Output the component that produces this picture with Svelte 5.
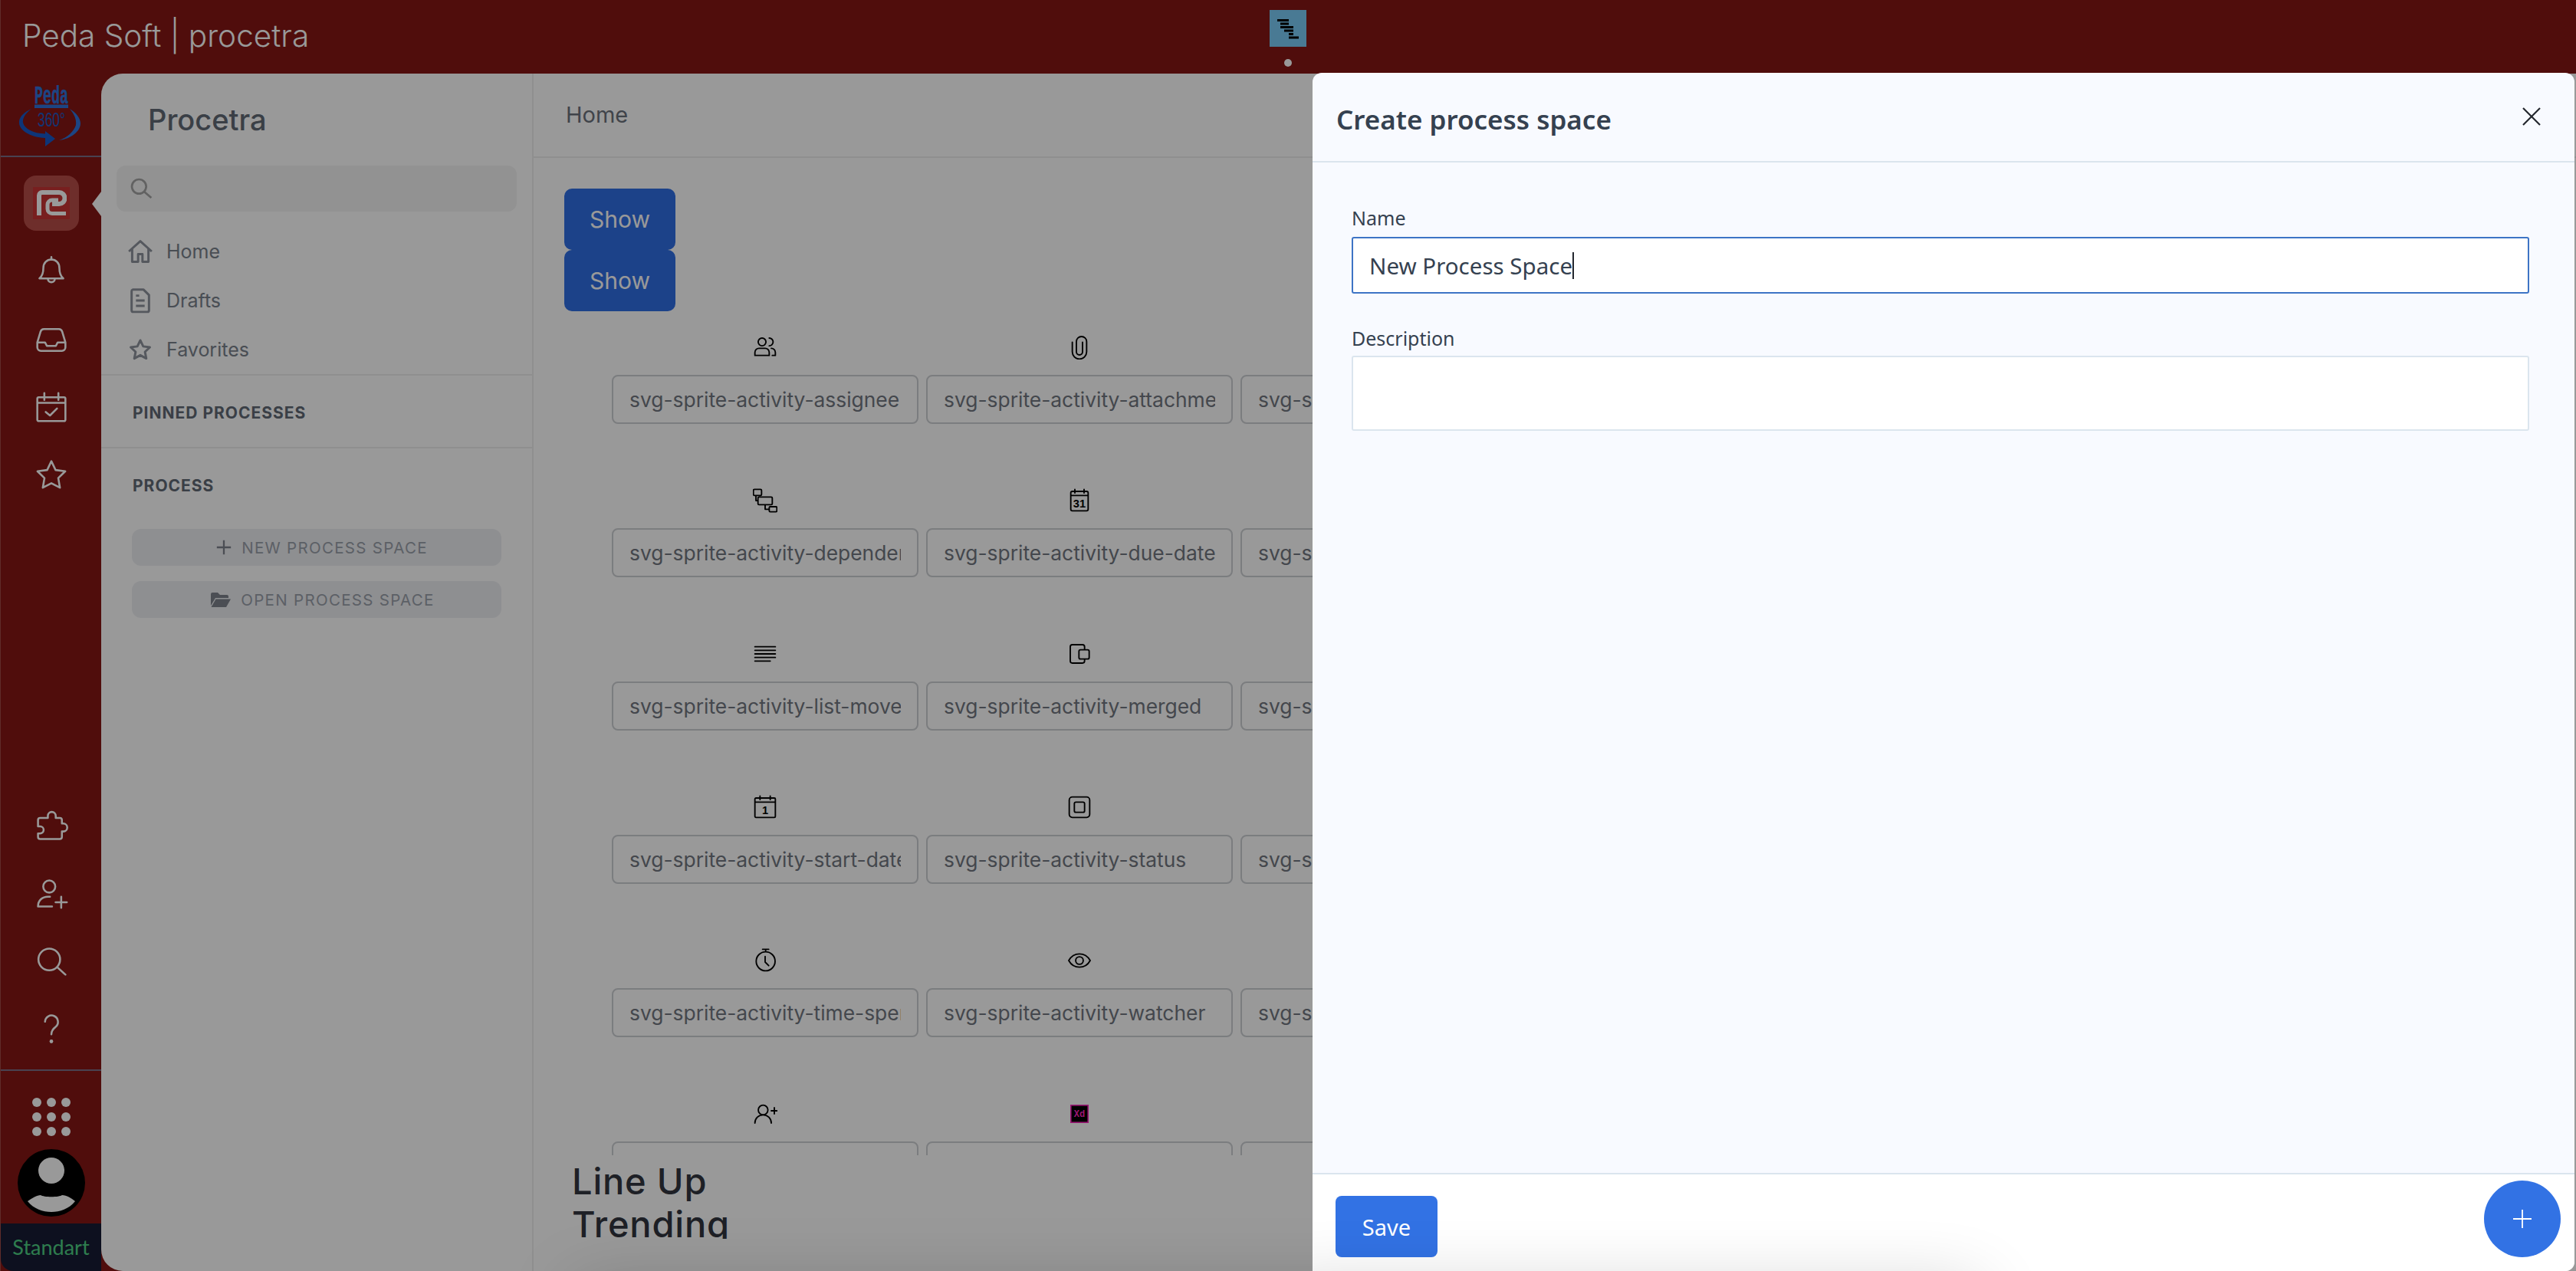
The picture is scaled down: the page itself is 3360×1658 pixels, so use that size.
<script>
  const navIcons = [
    { d: 'M12 3C8.700 3 6.300 5.500 6.300 9c0 4-1.200 6.200-2.800 7.500h17c-1.600-1.300-2.800-3.500-2.800-7.500C17.700 5.500 15.300 3 12 3zM12 1.200V3M9.500 16.700c0 3.300 5 3.300 5 0' },
    { d: 'M2 14l2.300-7.600A2.500 2.500 0 0 1 6.700 4.500h10.600a2.500 2.500 0 0 1 2.400 1.900L22 14v3.500a2.500 2.500 0 0 1-2.500 2.500h-15A2.500 2.500 0 0 1 2 17.500zM2 14h5.500l1.300 2.500h6.400l1.300-2.500H22' },
    { d: 'M3 5h18a1 1 0 0 1 1 1v15a1 1 0 0 1-1 1H3a1 1 0 0 1-1-1V6a1 1 0 0 1 1-1zM7 2v5M17 2v5M2 9h20M8 15.500l3 2.500 5-5' },
    { d: 'M12 2.500l3 6.300 6.900.9-5 4.800 1.200 6.900-6.100-3.200-6.100 3.200 1.200-6.900-5-4.800 6.900-.9z' }
  ];
  const toolIcons = [
    { d: 'M9.500 6V4.500a2.800 2.800 0 0 1 5.600 0V6H18a1.500 1.500 0 0 1 1.500 1.500V10h1a2.800 2.800 0 0 1 0 5.600h-1v3.900a1.500 1.500 0 0 1-1.500 1.500H4a1.500 1.500 0 0 1-1.500-1.500V17H4a2.500 2.500 0 0 0 0-5H2.500V7.500A1.500 1.500 0 0 1 4 6z' },
    { d: 'M10.500 2.500a4.300 4.300 0 1 1 0 8.600 4.300 4.300 0 0 1 0-8.600zM2.500 21c0-4.500 3.200-7 7-7h1.500M2.500 21h10M15 18h8M19 14v8' },
    { d: 'M10.500 3a7.700 7.700 0 1 1 0 15.400 7.700 7.700 0 0 1 0-15.400zM16 16l6 5.500' },
    { d: 'M7.500 7a4.600 4.600 0 1 1 7.500 3.700c-2 1.500-3 2.800-3 5.300', dot: true }
  ];

  const rows = [
    [
      { name: 'svg-sprite-activity-assignee', d: 'M9 3a3.800 3.800 0 1 1 0 7.600A3.800 3.800 0 0 1 9 3zM16 3a3.800 3.800 0 0 1 0 7.600M2 20v-3a4 4 0 0 1 4-4h6a4 4 0 0 1 4 4v3zM18 13a4 4 0 0 1 4 4v3h-3' },
      { name: 'svg-sprite-activity-attachment', d: 'M5 7v9.500a7 7 0 0 0 14 0V6.500a5 5 0 0 0-10 0v10a3 3 0 0 0 6 0V7' },
      { name: 'svg-sprite-activity-checklist' }
    ],
    [
      { name: 'svg-sprite-activity-dependency', d: 'M1.500 1h6a1 1 0 0 1 1 1v4a1 1 0 0 1-1 1h-6a1 1 0 0 1-1-1V2a1 1 0 0 1 1-1zM6 8.500h12a1 1 0 0 1 1 1v5.500a1 1 0 0 1-1 1H6a1 1 0 0 1-1-1V9.500a1 1 0 0 1 1-1zM17 18h5.500a1 1 0 0 1 1 1v3a1 1 0 0 1-1 1H17a1 1 0 0 1-1-1v-3a1 1 0 0 1 1-1zM12 16v4.500h4M3 7v5h2' },
      { name: 'svg-sprite-activity-due-date', d: 'M5 3h14a1.500 1.500 0 0 1 1.500 1.500v16A1.500 1.500 0 0 1 19 22H5a1.500 1.500 0 0 1-1.500-1.500v-16A1.500 1.500 0 0 1 5 3zM7.500 1v3.500M16.500 1v3.500M3.500 7h17', label: '31' },
      { name: 'svg-sprite-activity-label' }
    ],
    [
      { name: 'svg-sprite-activity-list-moved', d: 'M2 5h20M2 8.500h20M2 12h20M2 15.500h20M2 19h15' },
      { name: 'svg-sprite-activity-merged', d: 'M15 21H5a2 2 0 0 1-2-2V5a2 2 0 0 1 2-2h10a2 2 0 0 1 2 2v3M13 8h7a1.500 1.500 0 0 1 1.500 1.500v6A1.500 1.500 0 0 1 20 17h-7a1.500 1.500 0 0 1-1.500-1.500v-6A1.500 1.500 0 0 1 13 8zM17 17v2a2 2 0 0 1-2 2' },
      { name: 'svg-sprite-activity-milestone' }
    ],
    [
      { name: 'svg-sprite-activity-start-date', d: 'M3 3h18a1 1 0 0 1 1 1v17a1 1 0 0 1-1 1H3a1 1 0 0 1-1-1V4a1 1 0 0 1 1-1zM7 1v3.500M17 1v3.500M2 7h20', label: '1' },
      { name: 'svg-sprite-activity-status', d: 'M5 2h14a3 3 0 0 1 3 3v14a3 3 0 0 1-3 3H5a3 3 0 0 1-3-3V5a3 3 0 0 1 3-3zM8.500 7h7A1.500 1.500 0 0 1 17 8.500v7a1.500 1.500 0 0 1-1.500 1.500h-7A1.500 1.500 0 0 1 7 15.500v-7A1.500 1.500 0 0 1 8.500 7z' },
      { name: 'svg-sprite-activity-subtask' }
    ],
    [
      { name: 'svg-sprite-activity-time-spent', d: 'M12.500 3.500a9.200 9.200 0 1 1 0 18.500 9.200 9.200 0 0 1 0-18.500zM9.500 1h6M12.500 1v2.500M12 8v5.500l3.500 3.500' },
      { name: 'svg-sprite-activity-watcher', d: 'M1.500 12C4 7.500 7.500 5.500 12 5.500s8 2 10.500 6.500C20 16.500 16.500 18.500 12 18.500S4 16.500 1.500 12zM12 8.300a3.700 3.700 0 1 1 0 7.400 3.700 3.700 0 0 1 0-7.400z' },
      { name: 'svg-sprite-activity-workflow' }
    ],
    [
      { name: '', d: 'M10 3.500a4.700 4.700 0 1 1 0 9.400 4.700 4.700 0 0 1 0-9.400zM2 21c0-4.500 3.500-8 8-8s8 3.500 8 8M18 9h6M21 6v6' },
      { name: '', xd: true },
      { name: '' }
    ]
  ];
</script>

<div class="app">
  <header class="topbar">
    <span class="brand">Peda Soft | procetra</span>
    <div class="gantt">
      <svg viewBox="0 0 48 48" width="48" height="48" aria-hidden="true">
        <path d="M10 13.500h15M14 18h11M14 22.500h17M19 27h12M25 31.500h6M25 36h13" stroke="#000" stroke-width="3" fill="none" />
      </svg>
    </div>
    <span class="status-dot"></span>
  </header>

  <div class="body-row">
    <nav class="rail">
      <div class="rail-logo">
        <svg viewBox="0 0 80 80" width="80" height="80" aria-hidden="true">
          <text class="logo-peda" x="20" y="24" textLength="44" lengthAdjust="spacingAndGlyphs">Peda</text>
          <path d="M20 25.500h44v4.500H20z" fill="#2f74dc" />
          <text class="logo-360" x="24" y="54" textLength="36" lengthAdjust="spacingAndGlyphs">360°</text>
          <path d="M16 31C4 36-1 44 0 50c1 9 14 18 34 19v11l13-10-13-10v3.500C18 63 7 57 5 49c-1-6 4-13 11-18z" fill="#1859c8" />
          <path d="M66 31c8 5 14 12 14 19 0 10-12 20-28 22 10-3 20-12 22-20 1-7-2-14-8-21z" fill="#2f74dc" />
        </svg>
      </div>

      <div class="rail-top">
        <div class="active-app">
          <div class="app-mark">
            <svg viewBox="0 0 40 34" width="40" height="34" aria-hidden="true">
              <path d="M4 33V7a4 4 0 0 1 4-4h22a7.500 7.500 0 0 1 0 15H21" fill="none" stroke="#fff" stroke-width="6" />
              <path d="M39 30.500H21a6 6 0 0 1-6-6V19a6 6 0 0 1 6-6h8" fill="none" stroke="#fff" stroke-width="5" />
            </svg>
          </div>
        </div>
        {#each navIcons as icon}
          <div class="rail-btn">
            <svg viewBox="0 0 24 24" width="44" height="44" aria-hidden="true"><path d={icon.d} /></svg>
          </div>
        {/each}
      </div>

      <div class="rail-tools">
        {#each toolIcons as icon}
          <div class="rail-btn">
            <svg viewBox="0 0 24 24" width="44" height="44" aria-hidden="true">
              <path d={icon.d} />
              {#if icon.dot}<circle class="solid" cx="12" cy="21" r="1.300" />{/if}
            </svg>
          </div>
        {/each}
      </div>

      <div class="rail-foot">
        <div class="dots">
          {#each Array(9) as _}<span></span>{/each}
        </div>
        <svg class="avatar" viewBox="0 0 88 88" width="88" height="88" aria-hidden="true">
          <circle cx="44" cy="44" r="44" fill="#000" />
          <circle cx="44" cy="28" r="17" fill="#fff" />
          <path d="M13 68c6-4 12-8 17-8 4 3 24 3 28 0 6 0 12 4 17 8-8 10-20 14-31 14s-23-4-31-14z" fill="#fff" />
        </svg>
        <div class="plan">Standart</div>
      </div>
    </nav>

    <div class="notch"></div>

    <main class="card">
      <aside class="sidebar">
        <h1 class="product">Procetra</h1>
        <div class="search">
          <svg viewBox="0 0 24 24" width="32" height="32" aria-hidden="true"><path d="M10 3a7 7 0 1 1 0 14 7 7 0 0 1 0-14zM15 15l7 6" /></svg>
        </div>
        <ul class="nav">
          <li>
            <svg viewBox="0 0 24 24" width="34" height="34" aria-hidden="true"><path d="M1.500 12L12 2.500 22.500 12M4.500 9.500V21.500h5.500v-7h4v7h5.500V9.500" /></svg>
            Home
          </li>
          <li>
            <svg viewBox="0 0 24 24" width="34" height="34" aria-hidden="true"><path d="M5 2h10l5 5v14a1.500 1.500 0 0 1-1.500 1.500h-13A1.500 1.500 0 0 1 4 21V3.500A1.500 1.500 0 0 1 5 2zM8 12h8M8 17h8M8 7.500h3" /></svg>
            Drafts
          </li>
          <li>
            <svg viewBox="0 0 24 24" width="34" height="34" aria-hidden="true"><path d="M12 3.500l2.700 5.600 6.100.8-4.500 4.200 1.200 6.100-5.500-3-5.500 3 1.200-6.100-4.500-4.200 6.100-.8z" /></svg>
            Favorites
          </li>
        </ul>
        <div class="section pinned">PINNED PROCESSES</div>
        <div class="section process">PROCESS</div>
        <div class="space-btn new">
          <svg viewBox="0 0 24 24" width="22" height="22" aria-hidden="true"><path d="M12 2v20M2 12h20" /></svg>
          NEW PROCESS SPACE
        </div>
        <div class="space-btn open">
          <svg class="filled" viewBox="0 0 28 24" width="28" height="24" aria-hidden="true"><path d="M1 5a2 2 0 0 1 2-2h7l3 3h9a2 2 0 0 1 2 2v2H7L1 20zM7.500 11.500H27L21 22H1.500z" /></svg>
          OPEN PROCESS SPACE
        </div>
      </aside>

      <section class="content">
        <div class="content-head">Home</div>
        <div class="content-body">
          <button class="show">Show</button>
          <button class="show">Show</button>
          <div class="sprites">
            {#each rows as row}
              {#each row as item}
                <div class="sprite">
                  <div class="sprite-icon">
                    {#if item.xd}
                      <svg viewBox="0 0 24 24" width="24" height="24" aria-hidden="true">
                        <rect x="0.800" y="0.800" width="22.400" height="22.400" fill="#000" stroke="#ff26be" stroke-width="1.600" />
                        <text class="xd" x="12" y="16" text-anchor="middle">Xd</text>
                      </svg>
                    {:else if item.d}
                      <svg viewBox="0 0 24 24" width="32" height="32" aria-hidden="true">
                        <path d={item.d} />
                        {#if item.label}<text class="cal" x="12" y="18.500" text-anchor="middle">{item.label}</text>{/if}
                      </svg>
                    {/if}
                  </div>
                  <div class="sprite-name"><span>{item.name}</span></div>
                </div>
              {/each}
            {/each}
          </div>
          <div class="trending">Line Up<br />Trending</div>
        </div>
      </section>
    </main>
  </div>

  <div class="bottom-glow"></div>
  <div class="scrim"></div>

  <aside class="drawer">
    <div class="drawer-head">
      <h2>Create process space</h2>
      <svg class="close" viewBox="0 0 24 24" width="24" height="24" aria-hidden="true"><path d="M1 1l22 22M23 1L1 23" /></svg>
    </div>
    <div class="drawer-body">
      <div class="field-label">Name</div>
      <div class="input focused"><span>New Process Space</span><i class="caret"></i></div>
      <div class="field-label second">Description</div>
      <div class="input area"></div>
    </div>
    <div class="drawer-foot">
      <button class="save">Save</button>
    </div>
    <div class="foot-glow"></div>
    <button class="fab" aria-label="Add">
      <svg viewBox="0 0 24 24" width="24" height="24" aria-hidden="true"><path d="M12 0v24M0 12h24" /></svg>
    </button>
  </aside>
</div>

<style>
  :global(body) {
    margin: 0;
    overflow: hidden;
    background: #851714;
  }
  .app {
    position: relative;
    width: 3360px;
    height: 1658px;
    overflow: hidden;
    display: flex;
    flex-direction: column;
    background: #851714;
    font-family: Inter, sans-serif;
  }

  .topbar {
    position: relative;
    height: 96px;
    flex: none;
  }
  .brand {
    display: block;
    padding: 23px 0 0 29px;
    font-family: Inter, sans-serif;
    font-weight: 300;
    font-size: 40.500px;
    line-height: 48px;
    color: #fff;
  }
  .gantt {
    position: absolute;
    left: 1656px;
    top: 13px;
    width: 48px;
    height: 48px;
    background: #7bcbf7;
  }
  .gantt svg { display: block; }
  .status-dot {
    position: absolute;
    left: 1675px;
    top: 77px;
    width: 10px;
    height: 10px;
    border-radius: 50%;
    background: #fff;
  }

  .body-row {
    flex: 1;
    display: flex;
    min-height: 0;
    position: relative;
  }

  .rail {
    width: 132px;
    flex: none;
    margin-top: -96px;
    padding-top: 96px;
    display: flex;
    flex-direction: column;
    align-items: center;
    border-left: 1px solid #a04a47;
    box-sizing: border-box;
  }
  .rail-logo {
    height: 109px;
    width: 100%;
    box-sizing: border-box;
    padding: 15px 4px 0 0;
    border-bottom: 2px solid #7a6f87;
    display: flex;
    justify-content: center;
  }
  .logo-peda {
    font-family: "Liberation Mono", monospace;
    font-weight: 700;
    font-size: 33px;
    fill: #2f74dc;
    stroke: #2f74dc;
    stroke-width: 0.600px;
  }
  .logo-360 {
    font-family: "Liberation Sans", sans-serif;
    font-size: 25px;
    fill: #1f58c0;
  }
  .rail-top {
    display: flex;
    flex-direction: column;
    align-items: center;
    padding-top: 24px;
    gap: 8px;
  }
  .active-app {
    width: 72px;
    height: 72px;
    margin-bottom: 6px;
    border-radius: 16px;
    background: #b74d49;
    display: flex;
    align-items: center;
    justify-content: center;
  }
  .app-mark {
    width: 48px;
    height: 42px;
    background: #c93535;
    display: flex;
    align-items: center;
    justify-content: center;
  }
  .rail-btn {
    width: 80px;
    height: 80px;
    display: flex;
    align-items: center;
    justify-content: center;
  }
  .rail-btn path {
    fill: none;
    stroke: #fff;
    stroke-width: 1.400;
    stroke-linecap: round;
    stroke-linejoin: round;
  }
  .rail-btn .solid { fill: #fff; }
  .rail-tools {
    margin-top: auto;
    display: flex;
    flex-direction: column;
    gap: 8px;
    padding-bottom: 13px;
  }
  .rail-foot {
    width: 100%;
    border-top: 2px solid #7a6f87;
    display: flex;
    flex-direction: column;
    align-items: center;
    padding-top: 35px;
  }
  .dots {
    display: grid;
    grid-template-columns: repeat(3, 12px);
    grid-auto-rows: 12px;
    gap: 7px;
  }
  .dots span {
    border-radius: 50%;
    background: #fff;
  }
  .avatar {
    display: block;
    margin-top: 17px;
  }
  .plan {
    margin-top: 9px;
    width: 100%;
    height: 62px;
    background: #171c35;
    color: #4ed083;
    font-family: Lato, sans-serif;
    font-size: 27px;
    line-height: 62px;
    text-align: center;
    border-bottom-left-radius: 16px;
  }

  .notch {
    position: absolute;
    left: 120px;
    top: 154px;
    width: 0;
    height: 0;
    border-top: 16px solid transparent;
    border-bottom: 16px solid transparent;
    border-right: 12px solid #fff;
  }

  .card {
    flex: 1;
    min-width: 0;
    display: flex;
    background: #fff;
    border-radius: 28px 0 0 28px;
    overflow: hidden;
  }

  .sidebar {
    width: 564px;
    flex: none;
    box-sizing: border-box;
    border-right: 2px solid #eeeeee;
    color: #7b828d;
  }
  .product {
    margin: 0;
    height: 120px;
    box-sizing: border-box;
    padding: 35px 0 0 61px;
    font-family: Inter, sans-serif;
    font-weight: 500;
    font-size: 38px;
    line-height: 50px;
    color: #616975;
  }
  .search {
    margin-left: 20px;
    width: 522px;
    height: 60px;
    border-radius: 12px;
    background: #f3f3f3;
    display: flex;
    align-items: center;
    padding-left: 16px;
    box-sizing: border-box;
  }
  .search path {
    fill: none;
    stroke: #a3a3a3;
    stroke-width: 2;
  }
  .nav {
    list-style: none;
    margin: 20px 0 0;
    padding: 0;
  }
  .nav li {
    height: 64px;
    display: flex;
    align-items: center;
    gap: 17px;
    padding-left: 34px;
    font-size: 25px;
  }
  .nav path {
    fill: none;
    stroke: #8e939d;
    stroke-width: 2.100;
    stroke-linejoin: round;
  }
  .section {
    padding-left: 41px;
    font-weight: 700;
    font-size: 21px;
    letter-spacing: 1px;
    color: #616975;
    border-top: 2px solid #eeeeee;
    box-sizing: border-box;
  }
  .pinned {
    height: 95px;
    line-height: 97px;
  }
  .process {
    height: 107px;
    line-height: 98px;
  }
  .space-btn {
    margin: 0 0 20px 40px;
    width: 482px;
    height: 48px;
    box-sizing: border-box;
    border-radius: 12px;
    background: #edeef2;
    display: flex;
    align-items: center;
    justify-content: center;
    gap: 12px;
    color: #9aa0aa;
    font-size: 20.500px;
    letter-spacing: 1.300px;
  }
  .space-btn.new {
    padding-left: 13px;
  }
  .space-btn.open {
    padding-left: 15px;
  }
  .space-btn path {
    fill: none;
    stroke: #7d838c;
    stroke-width: 2.500;
  }
  .space-btn .filled path {
    fill: #7d838c;
    stroke: none;
  }

  .content {
    flex: 1;
    min-width: 0;
    display: flex;
    flex-direction: column;
  }
  .content-head {
    height: 110px;
    flex: none;
    box-sizing: border-box;
    border-bottom: 2px solid #eeeeee;
    padding: 34px 0 0 42px;
    font-size: 29px;
    line-height: 40px;
    color: #6c727c;
  }
  .content-body {
    padding: 40px 0 0 40px;
    display: flex;
    flex-direction: column;
    align-items: flex-start;
  }
  .show {
    display: block;
    width: 145px;
    height: 80px;
    border: none;
    border-radius: 10px;
    background: #306ee4;
    color: #fff;
    font-family: Inter, sans-serif;
    font-size: 30px;
    padding: 0;
  }
  .sprites {
    margin: 19px 0 0 62px;
    height: 1082px;
    overflow: hidden;
    display: grid;
    grid-template-columns: repeat(3, 400px);
    grid-auto-rows: 200px;
    column-gap: 10px;
  }
  .sprite-icon {
    height: 56px;
    margin-bottom: 8px;
    display: flex;
    align-items: center;
    justify-content: center;
  }
  .sprite-icon path {
    fill: none;
    stroke: #000;
    stroke-width: 1.400;
    stroke-linejoin: round;
    stroke-linecap: round;
  }
  .cal {
    font-family: "Liberation Sans", sans-serif;
    font-weight: 700;
    font-size: 11px;
    fill: #000;
  }
  .xd {
    font-family: "Liberation Mono", monospace;
    font-weight: 700;
    font-size: 12px;
    fill: #ff26be;
  }
  .sprite-name {
    height: 64px;
    box-sizing: border-box;
    border: 2.500px solid #ced0d4;
    border-radius: 8px;
    padding: 0 21px;
    display: flex;
    align-items: center;
    overflow: hidden;
    font-size: 26.400px;
    color: #727780;
  }
  .sprite-name span {
    display: block;
    width: 100%;
    overflow: hidden;
    white-space: nowrap;
  }
  .trending {
    margin: 6px 0 0 10px;
    height: 103px;
    overflow: hidden;
    font-family: Inter, sans-serif;
    font-weight: 500;
    font-size: 47px;
    letter-spacing: 0.800px;
    line-height: 56px;
    color: #323640;
  }

  .bottom-glow {
    position: absolute;
    left: 760px;
    top: 1690px;
    width: 1800px;
    height: 40px;
    box-shadow: 0 0 90px 10px rgba(0, 0, 0, 0.22);
  }

  .scrim {
    position: absolute;
    inset: 0;
    background: rgba(0, 0, 0, 0.4);
  }

  .drawer {
    position: absolute;
    left: 1712px;
    top: 95px;
    width: 1646px;
    height: 1563px;
    display: flex;
    flex-direction: column;
    background: #f8faff;
    border-radius: 12px 12px 12px 0;
    overflow: hidden;
    font-family: "Noto Sans", sans-serif;
  }
  .drawer-head {
    height: 117px;
    flex: none;
    box-sizing: border-box;
    border-bottom: 2px solid #dbe5ee;
    display: flex;
    align-items: center;
    justify-content: space-between;
    padding: 6px 44px 0 31px;
  }
  .drawer-head h2 {
    margin: 0;
    font-weight: 600;
    font-size: 35px;
    color: #354150;
  }
  .close {
    margin-top: -8px;
  }
  .close path {
    fill: none;
    stroke: #23272e;
    stroke-width: 2.200;
  }
  .drawer-body {
    flex: 1;
    padding: 54px 59px 0 51px;
  }
  .field-label {
    font-size: 25px;
    line-height: 36px;
    color: #354150;
    margin-bottom: 7px;
  }
  .field-label.second {
    margin-top: 40px;
    margin-bottom: 5px;
  }
  .input {
    height: 74px;
    box-sizing: border-box;
    border: 2px solid #dbe5ee;
    border-radius: 3px;
    background: #fff;
    padding: 0 21px;
    display: flex;
    align-items: center;
    font-size: 29.500px;
    color: #354150;
  }
  .input.focused {
    border-color: #3d74c5;
  }
  .input.area {
    height: 98px;
  }
  .caret {
    width: 2px;
    height: 35px;
    background: #23272e;
  }
  .drawer-foot {
    height: 128px;
    flex: none;
    box-sizing: border-box;
    background: #fff;
    border-top: 2px solid #dbe5ee;
    padding: 28px 0 0 30px;
  }
  .save {
    display: block;
    width: 133px;
    height: 80px;
    border: none;
    border-radius: 8px;
    background: #3272e4;
    color: #fff;
    font-family: "Noto Sans", sans-serif;
    font-size: 29px;
    padding: 0;
  }
  .foot-glow {
    position: absolute;
    left: -40px;
    top: 1595px;
    width: 900px;
    height: 40px;
    box-shadow: 0 0 90px 10px rgba(0, 0, 0, 0.2);
    pointer-events: none;
  }
  .fab {
    position: absolute;
    left: 1528px;
    top: 1445px;
    width: 100px;
    height: 100px;
    border: none;
    border-radius: 50%;
    background: #3272e4;
    display: flex;
    align-items: center;
    justify-content: center;
    padding: 0;
  }
  .fab path {
    fill: none;
    stroke: #fff;
    stroke-width: 1.800;
  }
</style>
